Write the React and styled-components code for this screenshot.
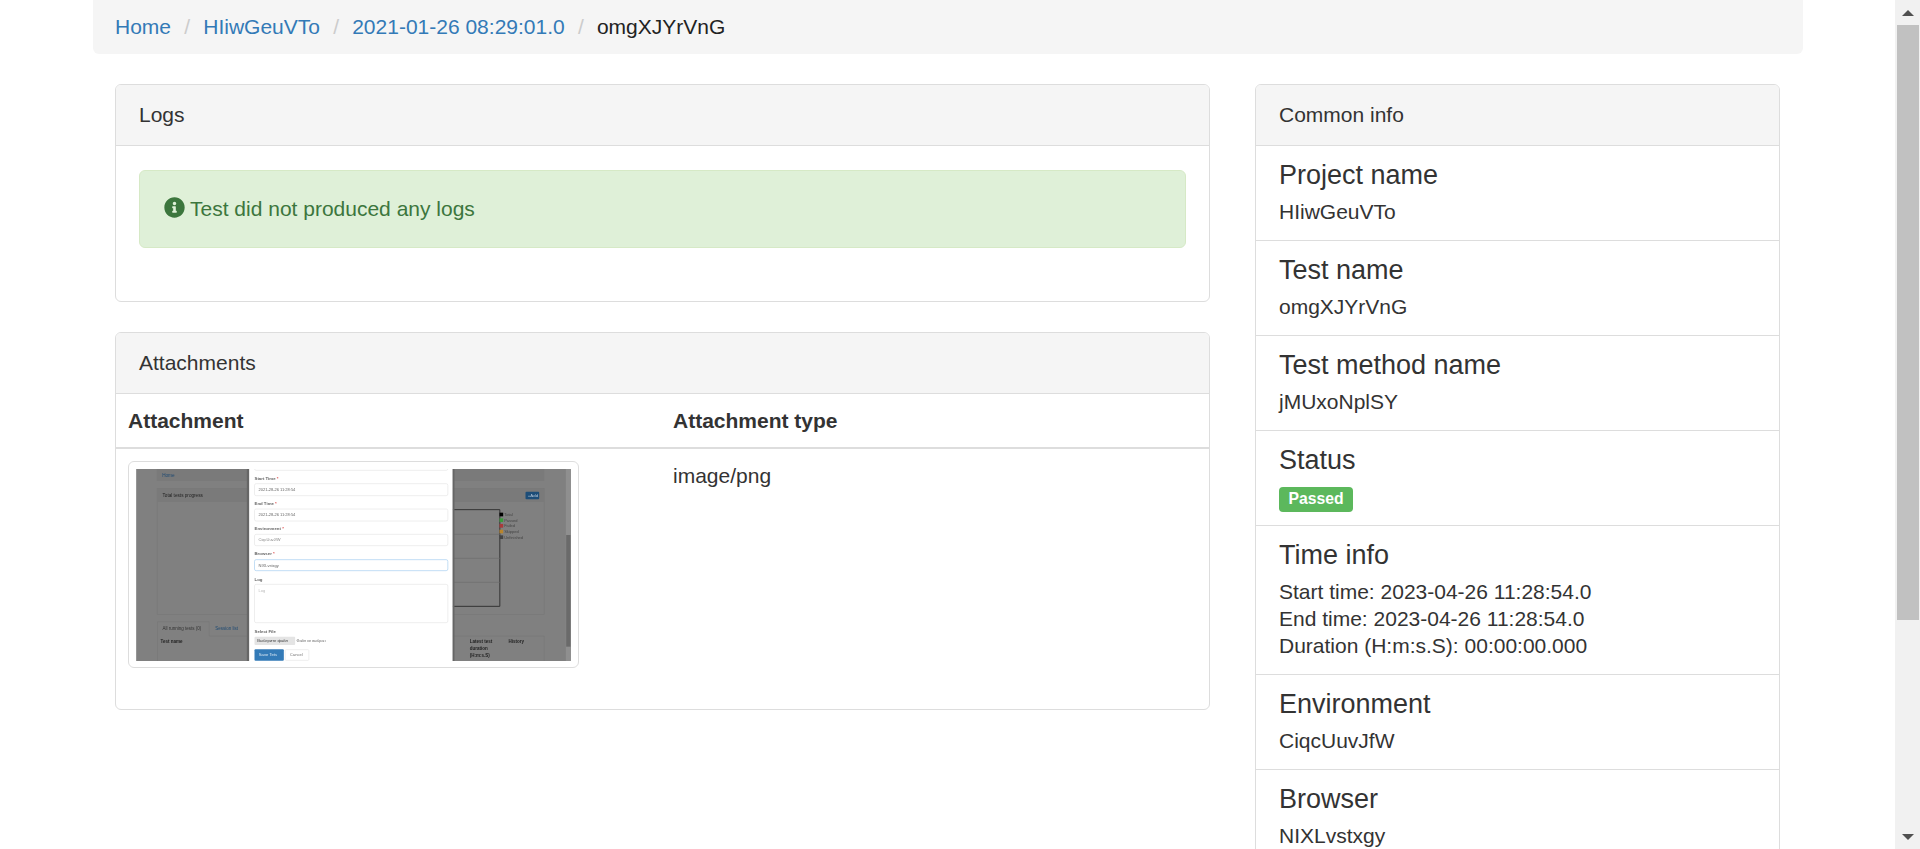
import styled, { createGlobalStyle } from "styled-components";
import { FaInfoCircle } from "react-icons/fa";

const Global = createGlobalStyle`
    html, body {
        margin: 0;
        height: 100%;
        overflow: hidden;
        background: #fff;
    }
    body {
        font-family: "Liberation Sans", Arial, sans-serif;
        font-size: 21px;
        line-height: 30px;
        color: #333;
    }
    * {
        box-sizing: border-box;
    }
`;

const Page = styled.div`
    padding-right: 25px;
`;

const Breadcrumb = styled.ol`
    display: flex;
    list-style: none;
    height: 54px;
    margin: 0 92px 30px 93px;
    padding: 12px 22px;
    background: #f5f5f5;
    border-radius: 0 0 6px 6px;
`;

const Crumb = styled.li`
    color: #222;

    & + &::before {
        content: "/";
        color: #ccc;
        padding: 0 13.2px;
    }

    a {
        color: #337ab7;
        text-decoration: none;
    }
`;

const Columns = styled.div`
    display: grid;
    grid-template-columns: 1095px 525px;
    column-gap: 45px;
    padding-left: 115px;
    align-items: start;
`;

const Panel = styled.section`
    background: #fff;
    border: 1px solid #ddd;
    border-radius: 6px;
    margin-bottom: 30px;
    overflow: hidden;
`;

const PanelHeading = styled.div`
    height: 61px;
    padding: 15px 23px;
    background: #f5f5f5;
    border-bottom: 1px solid #ddd;
    color: #333;
`;

const PanelBody = styled.div`
    padding: 24px 23px 23px;
`;

const Alert = styled.div`
    display: flex;
    align-items: center;
    gap: 5px;
    height: 78px;
    margin-bottom: 30px;
    padding: 0 24px;
    background: #dff0d8;
    border: 1px solid #d6e9c6;
    border-radius: 6px;
    color: #3c763d;

    svg {
        width: 21px;
        height: 21px;
        margin-top: -3px;
    }
`;

const Table = styled.table`
    width: 100%;
    border-collapse: collapse;
    table-layout: fixed;
`;

const Th = styled.th`
    width: ${(props) => props.$width || "auto"};
    padding: 12px 12px 11px;
    text-align: left;
    font-weight: 700;
    border-bottom: 2px solid #ddd;
`;

const Td = styled.td`
    padding: 12px;
    vertical-align: top;
`;

const Thumbnail = styled.div`
    width: 451px;
    height: 207px;
    margin-bottom: 29px;
    padding: 7px 7px;
    background: #fff;
    border: 1px solid #ddd;
    border-radius: 6px;

    svg {
        display: block;
        filter: blur(0.6px);
    }
`;

const InfoRow = styled.div`
    padding: 14px 23px 15px;
    border-top: ${(props) => (props.$first ? "none" : "1px solid #ddd")};
`;

const InfoTitle = styled.h4`
    margin: 0 0 8px;
    font-size: 27px;
    font-weight: 400;
    line-height: 30px;
    color: #333;
`;

const InfoText = styled.p`
    margin: 0;
    font-size: 21px;
    line-height: 27px;
`;

const Badge = styled.span`
    display: block;
    width: fit-content;
    height: 25px;
    margin: 12px 0 -2px;
    padding: 0 9.5px;
    background: #5cb85c;
    border-radius: 4px;
    color: #fff;
    font-size: 15.75px;
    font-weight: 700;
    line-height: 23px;
`;

const ScrollBar = styled.div`
    position: fixed;
    top: 0;
    right: 0;
    bottom: 0;
    width: 25px;
    display: flex;
    flex-direction: column;
    background: #f1f1f1;
`;

const ScrollArrow = styled.div`
    flex: none;
    height: 25px;
    display: flex;
    align-items: center;
    justify-content: center;

    &::before {
        content: "";
        border-left: 6px solid transparent;
        border-right: 6px solid transparent;
        ${(props) =>
            props.$down ? "border-top: 6px solid #505050;" : "border-bottom: 6px solid #505050;"}
    }
`;

const ScrollThumb = styled.div`
    flex: none;
    height: 595px;
    margin: 0 1px 0 2px;
    background: #c1c1c1;
`;

const ScrollTrack = styled.div`
    flex: 1;
`;

// screenshot of the "add test" dialog, coordinates are just the picture's own
const ModalShot = () => {
    const field = (y, h, stroke) => (
        <rect x="403" y={y} width="580" height={h} rx="5" fill="#fff" stroke={stroke || "#e6e6e6"} strokeWidth="2" />
    );
    const label = (y, text, star) => (
        <text x="403" y={y} fontSize="13" fontWeight="700" fill="#666">
            {text}
            {star && <tspan fill="#e05050"> *</tspan>}
        </text>
    );
    const legend = [
        ["#000", "Total", 179],
        ["#3c9a3c", "Passed", 196],
        ["#a83a3a", "Failed", 213],
        ["#b8842c", "Skipped", 230],
        ["#444", "Unfinished", 247],
    ];

    return (
        <svg width="435" height="192" viewBox="48 42 1304 576" fontFamily="Liberation Sans, Arial, sans-serif">
            <rect x="48" y="42" width="1304" height="576" fill="#808080" />
            <rect x="110" y="42" width="1162" height="36" fill="#7a7a7a" />
            <text x="126" y="65" fontSize="14" fill="#1e4a72">Home</text>

            <rect x="111" y="100" width="1161" height="378" fill="#808080" stroke="#777" strokeWidth="2" />
            <rect x="112" y="101" width="1159" height="40" fill="#7a7a7a" />
            <text x="127" y="125" fontSize="14" fill="#222">Total tests progress</text>
            <rect x="1216" y="110" width="41" height="23" rx="3" fill="#1d4d78" />
            <text x="1223" y="126" fontSize="13" fill="#b8c8d8">+Add</text>

            <path d="M997 164H1139V454H997" fill="none" stroke="#333" strokeWidth="3" />
            <path d="M997 238H1139M997 310H1139M997 382H1139" stroke="#6c6c6c" strokeWidth="2" />
            {legend.map(([color, name, y]) => (
                <g key={name}>
                    <rect x="1138" y={y - 6} width="11" height="11" fill={color} />
                    <text x="1152" y={y + 4} fontSize="12" fill="#444">{name}</text>
                </g>
            ))}

            <path d="M112 543V500H267V543M267 543H1272V618M112 543V618" fill="none" stroke="#777" strokeWidth="2" />
            <text x="127" y="526" fontSize="13.5" fill="#333">All running tests (0)</text>
            <text x="285" y="526" fontSize="13.5" fill="#1e4a72">Session list</text>
            <text x="121" y="565" fontSize="13.5" fontWeight="700" fill="#222">Test name</text>
            <text x="1049" y="565" fontSize="13.5" fontWeight="700" fill="#222">Latest test</text>
            <text x="1049" y="585" fontSize="13.5" fontWeight="700" fill="#222">duration</text>
            <text x="1049" y="605" fontSize="13.5" fontWeight="700" fill="#222">(H:m:s.S)</text>
            <text x="1165" y="565" fontSize="13.5" fontWeight="700" fill="#222">History</text>

            <rect x="1337" y="42" width="15" height="576" fill="#8f8f8f" />
            <rect x="1338" y="240" width="13" height="335" fill="#6a6a6a" />

            <rect x="380" y="42" width="7" height="576" fill="#666" />
            <rect x="997" y="42" width="6" height="576" fill="#666" />
            <rect x="387" y="42" width="610" height="576" fill="#fff" />

            {field(20, 26)}
            {label(76, "Start Time", true)}
            {field(86, 36)}
            <text x="415" y="108" fontSize="12" fill="#666">2021-28-26 11:28:54</text>
            {label(151, "End Time", true)}
            {field(162, 36)}
            <text x="415" y="184" fontSize="12" fill="#666">2021-28-26 11:28:54</text>
            {label(226, "Environment", true)}
            {field(238, 34)}
            <text x="415" y="259" fontSize="12" fill="#888">CiqcUuvJfW</text>
            {label(301, "Browser", true)}
            {field(314, 33, "#a4cdf0")}
            <text x="415" y="335" fontSize="12" fill="#666">NIXLvstxgy</text>
            {label(377, "Log", false)}
            {field(388, 115)}
            <text x="415" y="410" fontSize="12" fill="#bbb">Log</text>
            {label(533, "Select File", false)}
            <rect x="403" y="545" width="122" height="25" rx="3" fill="#e4e4e4" />
            <text x="411" y="561" fontSize="12.5" fill="#444">Выберите файл</text>
            <text x="529" y="561" fontSize="11.5" fill="#666">Файл не выбран</text>
            <rect x="403" y="583" width="88" height="34" rx="3" fill="#337ab7" />
            <text x="416" y="604" fontSize="12.5" fill="#dbe8f3">Save Tets</text>
            <rect x="495" y="584" width="71" height="32" rx="3" fill="#fff" stroke="#e6e6e6" strokeWidth="2" />
            <text x="509" y="604" fontSize="12.5" fill="#777">Cancel</text>
        </svg>
    );
};

const infoRows = [
    ["Project name", ["HIiwGeuVTo"]],
    ["Test name", ["omgXJYrVnG"]],
    ["Test method name", ["jMUxoNplSY"]],
];

const lowerRows = [
    [
        "Time info",
        [
            "Start time: 2023-04-26 11:28:54.0",
            "End time: 2023-04-26 11:28:54.0",
            "Duration (H:m:s.S): 00:00:00.000",
        ],
    ],
    ["Environment", ["CiqcUuvJfW"]],
    ["Browser", ["NIXLvstxgy"]],
];

const renderRow = ([title, lines], index, first) => (
    <InfoRow key={title} $first={first && index === 0}>
        <InfoTitle>{title}</InfoTitle>
        {lines.map((line) => (
            <InfoText key={line}>{line}</InfoText>
        ))}
    </InfoRow>
);

const App = () => {
    return (
        <Page>
            <Global />
            <Breadcrumb>
                <Crumb><a href="#home">Home</a></Crumb>
                <Crumb><a href="#project">HIiwGeuVTo</a></Crumb>
                <Crumb><a href="#session">2021-01-26 08:29:01.0</a></Crumb>
                <Crumb>omgXJYrVnG</Crumb>
            </Breadcrumb>
            <Columns>
                <div>
                    <Panel>
                        <PanelHeading>Logs</PanelHeading>
                        <PanelBody>
                            <Alert>
                                <FaInfoCircle />
                                <span>Test did not produced any logs</span>
                            </Alert>
                        </PanelBody>
                    </Panel>
                    <Panel>
                        <PanelHeading>Attachments</PanelHeading>
                        <Table>
                            <thead>
                                <tr>
                                    <Th $width="545px">Attachment</Th>
                                    <Th>Attachment type</Th>
                                </tr>
                            </thead>
                            <tbody>
                                <tr>
                                    <Td>
                                        <Thumbnail>
                                            <ModalShot />
                                        </Thumbnail>
                                    </Td>
                                    <Td>image/png</Td>
                                </tr>
                            </tbody>
                        </Table>
                    </Panel>
                </div>
                <Panel>
                    <PanelHeading>Common info</PanelHeading>
                    {infoRows.map((row, i) => renderRow(row, i, true))}
                    <InfoRow>
                        <InfoTitle>Status</InfoTitle>
                        <Badge>Passed</Badge>
                    </InfoRow>
                    {lowerRows.map((row, i) => renderRow(row, i, false))}
                </Panel>
            </Columns>
            <ScrollBar>
                <ScrollArrow />
                <ScrollThumb />
                <ScrollTrack />
                <ScrollArrow $down />
            </ScrollBar>
        </Page>
    );
};

export default App;
